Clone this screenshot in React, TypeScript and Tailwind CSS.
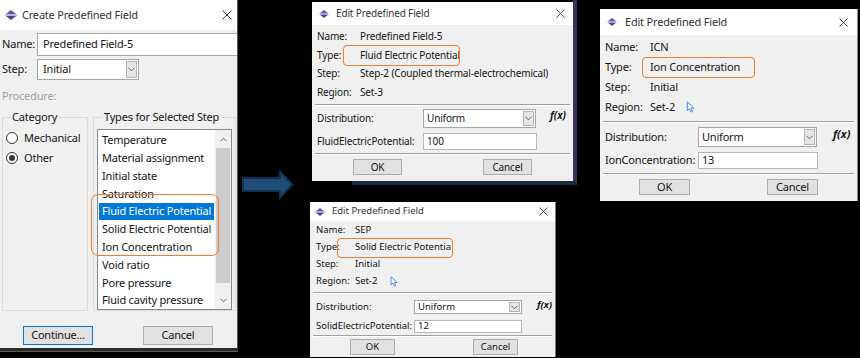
import clsx from "clsx";
import type { ReactNode } from "react";

const types = [
  "Temperature",
  "Material assignment",
  "Initial state",
  "Saturation",
  "Fluid Electric Potential",
  "Solid Electric Potential",
  "Ion Concentration",
  "Void ratio",
  "Pore pressure",
  "Fluid cavity pressure",
];

function AppIcon({ className }: { className?: string }) {
  return (
    <svg viewBox="0 0 12 10" className={className}>
      <path d="M6 0 L11.5 4.3 H0.5 Z" fill="#5d58a8" />
      <path d="M0.5 5.7 H11.5 L6 10 Z" fill="#4b4796" />
      <rect x="0" y="4.4" width="12" height="1.2" fill="#a9a6dc" />
    </svg>
  );
}

function CloseX({ className }: { className?: string }) {
  return (
    <svg viewBox="0 0 10 10" className={className}>
      <path d="M0.5 0.5 L9.5 9.5 M9.5 0.5 L0.5 9.5" stroke="#3a3a3a" strokeWidth="1" />
    </svg>
  );
}

function Chevron({ up, className }: { up?: boolean; className?: string }) {
  return (
    <svg viewBox="0 0 8 5" className={className}>
      <path
        d={up ? "M0.5 4.5 L4 1 L7.5 4.5" : "M0.5 0.5 L4 4 L7.5 0.5"}
        fill="none"
        stroke="#555"
        strokeWidth="1"
      />
    </svg>
  );
}

function Pointer({ className }: { className?: string }) {
  return (
    <svg viewBox="0 0 9 13" className={className}>
      <path
        d="M1 1 V10.5 L3.4 8.3 L5 12 L6.6 11.3 L5.1 7.7 H8.2 Z"
        fill="#fff"
        stroke="#2b7de9"
        strokeWidth="1"
        strokeLinejoin="round"
      />
    </svg>
  );
}

function TitleBar({ title, className, iconGap }: { title: string; className: string; iconGap: string }) {
  return (
    <div className={clsx("bg-white flex items-center shrink-0", className)}>
      <AppIcon className="w-[10px] h-[8px]" />
      <span className={clsx("text-[#333]", iconGap)}>{title}</span>
      <CloseX className="ml-auto w-[9px] h-[9px]" />
    </div>
  );
}

function Combo({ className, children }: { className: string; children: ReactNode }) {
  return (
    <div className={clsx("flex border border-[#a6a6a6] bg-white", className)}>
      <span className="flex-1 flex items-center pl-[3px]">{children}</span>
      <span className="w-[11px] my-[1px] mr-[1px] flex items-center justify-center border border-[#b4b4b4] bg-[#e6e6e6]">
        <Chevron className="w-[7px] h-[5px]" />
      </span>
    </div>
  );
}

function Field({ className, children }: { className: string; children: ReactNode }) {
  return (
    <div className={clsx("flex items-center pl-[3px] border border-[#b8b8b8] bg-white", className)}>{children}</div>
  );
}

function Btn({ className, focus, children }: { className: string; focus?: boolean; children: ReactNode }) {
  return (
    <div
      className={clsx(
        "flex items-center justify-center bg-[#e1e1e1] border",
        focus ? "border-[#0078d7]" : "border-[#adadad]",
        className,
      )}
    >
      {children}
    </div>
  );
}

function Sep({ className }: { className?: string }) {
  return (
    <div className={clsx("h-[2px] shrink-0 mx-[3px] border-t border-t-[#a0a0a0] border-b border-b-white", className)} />
  );
}

function Info({ row, labelW, label, children }: { row: string; labelW: string; label: string; children: ReactNode }) {
  return (
    <div className={clsx("flex items-center", row)}>
      <span className={labelW}>{label}</span>
      {children}
    </div>
  );
}

function FX({ className }: { className?: string }) {
  return <span className={clsx("font-bold italic tracking-normal", className)}>f(x)</span>;
}

function Radio({ label, checked }: { label: string; checked?: boolean }) {
  return (
    <div className="h-[20px] flex items-center">
      <span className="w-[12px] h-[12px] rounded-full border border-[#333] bg-white flex items-center justify-center">
        {checked && <span className="w-[6px] h-[6px] rounded-full bg-[#333]" />}
      </span>
      <span className="ml-[6px]">{label}</span>
    </div>
  );
}

function CreateDialog() {
  return (
    <div className="absolute left-0 top-0 flex flex-col">
      <div className="w-[238px] h-[348px] bg-[#f0f0f0] border-r border-[#555] flex flex-col text-[11px] tracking-[-0.2px] text-[#141414]">
        <div className="h-[30px] bg-white flex items-center pl-[5px] pr-[5px] shrink-0">
          <AppIcon className="w-[12px] h-[10px]" />
          <span className="ml-[5px] text-[#333]">Create Predefined Field</span>
          <CloseX className="ml-auto w-[10px] h-[10px]" />
        </div>

        <div className="mt-[3px] h-[23px] shrink-0 flex items-center pl-[2px]">
          <span className="w-[35px]">Name:</span>
          <div className="flex-1 h-full border border-r-0 border-[#a9a9a9] bg-white flex items-center pl-[5px]">
            Predefined Field-5
          </div>
        </div>
        <div className="mt-[3px] h-[21px] shrink-0 flex items-center pl-[2px]">
          <span className="w-[35px]">Step:</span>
          <Combo className="w-[102px] h-full">
            <span className="pl-[2px]">Initial</span>
          </Combo>
        </div>
        <div className="mt-[9px] h-[14px] shrink-0 leading-[14px] pl-[2px] text-[#a0a0a0]">Procedure:</div>

        <div className="mt-[7px] flex shrink-0 pl-[2px] h-[201px]">
          <fieldset className="w-[86px] h-full border border-[#dcdcdc] px-[3px]">
            <legend className="ml-[4px] px-[2px] leading-[14px]">Category</legend>
            <div className="mt-[4px] flex flex-col">
              <Radio label="Mechanical" />
              <Radio label="Other" checked />
            </div>
          </fieldset>
          <fieldset className="ml-[5px] w-[142px] h-full border border-[#dcdcdc] px-[3px]">
            <legend className="ml-[5px] px-[2px] leading-[14px]">Types for Selected Step</legend>
            <div className="mt-[5px] h-[181px] border border-[#828790] bg-white flex">
              <div className="flex-1 pt-[1.5px]">
                {types.map((t) => (
                  <div
                    key={t}
                    className={clsx(
                      "h-[17.8px] mx-[1px] px-[3px] flex items-center whitespace-nowrap",
                      t === "Fluid Electric Potential" && "bg-[#0078d7] text-white",
                    )}
                  >
                    {t}
                  </div>
                ))}
              </div>
              <div className="w-[16px] bg-[#f0f0f0] flex flex-col">
                <div className="h-[18px] flex items-center justify-center">
                  <Chevron up className="w-[7px] h-[5px]" />
                </div>
                <div className="h-[135px] mx-[1px] bg-[#cdcdcd]" />
                <div className="flex-1" />
                <div className="h-[18px] flex items-center justify-center">
                  <Chevron className="w-[7px] h-[5px]" />
                </div>
              </div>
            </div>
          </fieldset>
        </div>

        <div className="mt-[15px] shrink-0 flex pl-[23px] gap-[50px]">
          <Btn className="w-[70px] h-[19px]" focus>
            Continue...
          </Btn>
          <Btn className="w-[70px] h-[19px]">Cancel</Btn>
        </div>
      </div>
      <div className="w-[238px] h-[4px] bg-[#2c2c2c] border-b border-[#5c5c5c]" />
    </div>
  );
}

function FluidDialog() {
  return (
    <div className="absolute left-[312px] top-[2px] w-[261px] h-[179px] bg-[#f0f0f0] flex flex-col text-[10px] tracking-[-0.15px] text-[#141414]">
      <TitleBar title="Edit Predefined Field" className="h-[23px] pl-[7px] pr-[8px]" iconGap="ml-[7px]" />
      <div className="pt-[2.5px] pl-[5px]">
        <Info row="h-[18.5px]" labelW="w-[43px]" label="Name:">Predefined Field-5</Info>
        <Info row="h-[18.5px]" labelW="w-[43px]" label="Type:">Fluid Electric Potential</Info>
        <Info row="h-[18.5px]" labelW="w-[43px]" label="Step:">Step-2 (Coupled thermal-electrochemical)</Info>
        <Info row="h-[18.5px]" labelW="w-[43px]" label="Region:">Set-3</Info>
      </div>
      <Sep className="mt-[2.5px]" />
      <div className="mt-[3px] h-[19px] flex items-center pl-[5px]">
        <span className="w-[106px]">Distribution:</span>
        <Combo className="w-[113px] h-full">Uniform</Combo>
        <FX className="ml-[14px] self-start mt-[-1px]" />
      </div>
      <div className="mt-[5px] h-[17px] flex items-center pl-[5px]">
        <span className="w-[106px]">FluidElectricPotential:</span>
        <Field className="w-[114px] h-full">100</Field>
      </div>
      <Sep className="mt-[3px]" />
      <div className="mt-[4px] flex pl-[41px] gap-[81px]">
        <Btn className="w-[49px] h-[16px]">OK</Btn>
        <Btn className="w-[49px] h-[16px]">Cancel</Btn>
      </div>
    </div>
  );
}

function IonDialog() {
  return (
    <div className="absolute left-[600px] top-[9px] w-[258px] h-[192px] bg-[#f0f0f0] border-r border-[#8a8a8a] flex flex-col text-[11px] tracking-[-0.2px] text-[#141414]">
      <TitleBar title="Edit Predefined Field" className="h-[26px] pl-[7px] pr-[9px]" iconGap="ml-[8px]" />
      <div className="pt-[2px] pl-[5px]">
        <Info row="h-[20px]" labelW="w-[45px]" label="Name:">ICN</Info>
        <Info row="h-[20px]" labelW="w-[45px]" label="Type:">Ion Concentration</Info>
        <Info row="h-[20px]" labelW="w-[45px]" label="Step:">Initial</Info>
        <Info row="h-[20px]" labelW="w-[45px]" label="Region:">
          Set-2
          <Pointer className="ml-[11px] w-[9px] h-[12px]" />
        </Info>
      </div>
      <Sep className="mt-[4px]" />
      <div className="mt-[4px] h-[20px] flex items-center pl-[5px]">
        <span className="w-[93px]">Distribution:</span>
        <Combo className="w-[119px] h-full">Uniform</Combo>
        <FX className="ml-[16px] self-start mt-[-1px]" />
      </div>
      <div className="mt-[5px] h-[17px] flex items-center pl-[5px]">
        <span className="w-[93px]">IonConcentration:</span>
        <Field className="w-[120px] h-full">13</Field>
      </div>
      <Sep className="mt-[4px]" />
      <div className="mt-[4px] flex pl-[39px] gap-[77px]">
        <Btn className="w-[51px] h-[16px]">OK</Btn>
        <Btn className="w-[51px] h-[16px]">Cancel</Btn>
      </div>
    </div>
  );
}

function SolidDialog() {
  return (
    <div className="absolute left-[310px] top-[202px] w-[246px] h-[155px] bg-[#f0f0f0] border-r border-[#7a7a7a] flex flex-col text-[9.5px] text-[#141414]">
      <TitleBar title="Edit Predefined Field" className="h-[19px] pl-[5px] pr-[7px]" iconGap="ml-[7px]" />
      <div className="pt-[1px] pl-[6px]">
        <Info row="h-[17px]" labelW="w-[39px]" label="Name:">SEP</Info>
        <Info row="h-[17px]" labelW="w-[39px]" label="Type:">Solid Electric Potentia</Info>
        <Info row="h-[17px]" labelW="w-[39px]" label="Step:">Initial</Info>
        <Info row="h-[17px]" labelW="w-[39px]" label="Region:">
          Set-2
          <Pointer className="ml-[12px] w-[8px] h-[11px]" />
        </Info>
      </div>
      <Sep className="mt-[2px]" />
      <div className="mt-[6px] h-[14px] flex items-center pl-[6px]">
        <span className="w-[98px]">Distribution:</span>
        <Combo className="w-[108px] h-full">Uniform</Combo>
        <FX className="ml-[15px] self-start mt-[-2px]" />
      </div>
      <div className="mt-[6px] h-[13px] flex items-center pl-[6px]">
        <span className="w-[98px]">SolidElectricPotential:</span>
        <Field className="w-[108px] h-full">12</Field>
      </div>
      <Sep className="mt-[2px]" />
      <div className="mt-[2px] flex pl-[40px] gap-[78px]">
        <Btn className="w-[45px] h-[16px]">OK</Btn>
        <Btn className="w-[45px] h-[16px]">Cancel</Btn>
      </div>
    </div>
  );
}

export default function App() {
  return (
    <div className="relative w-[860px] h-[358px] overflow-hidden bg-black font-['Noto_Sans','DejaVu_Sans',sans-serif]">
      <CreateDialog />

      {/* arrow between the dialogs */}
      <svg className="absolute left-[242px] top-[170px] w-[52px] h-[30px]" viewBox="0 0 52 30">
        <path
          d="M1 8 H38 V1.5 L50.5 14.5 L38 27.5 V21 H1 Z"
          fill="#1f4d7a"
          stroke="#132f4d"
          strokeWidth="2"
          strokeLinejoin="miter"
        />
      </svg>

      {/* bits of the application behind the first edit dialog */}
      <div className="absolute left-[573px] top-0 w-[4px] h-[185px] bg-[#3d2f57]" />
      <div className="absolute left-[352px] top-[181px] w-[225px] h-[4px] bg-[#1f2a44]" />

      <FluidDialog />
      <IonDialog />
      <SolidDialog />

      {/* orange highlight frames */}
      <div className="absolute left-[91px] top-[194px] w-[128px] h-[62px] rounded-[7px] border-[1.5px] border-[#ed7d31]" />
      <div className="absolute left-[343px] top-[45px] w-[117px] h-[21px] rounded-[4px] border-[1.5px] border-[#ed7d31]" />
      <div className="absolute left-[642px] top-[57px] w-[113px] h-[21px] rounded-[4px] border-[1.5px] border-[#ed7d31]" />
      <div className="absolute left-[337px] top-[238px] w-[116px] h-[20px] rounded-[4px] border-[1.5px] border-[#ed7d31]" />
    </div>
  );
}
